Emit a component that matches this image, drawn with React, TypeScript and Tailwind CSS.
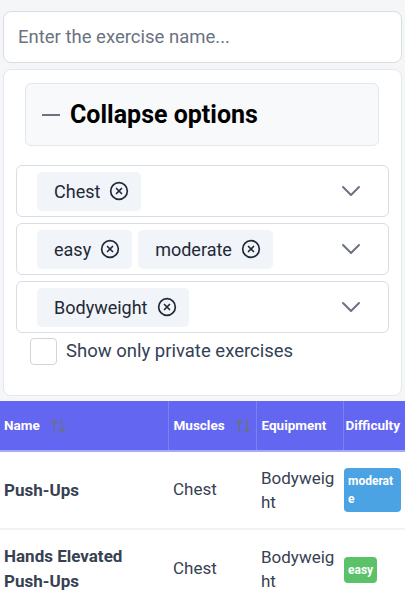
import { ChevronDown, CircleX, ArrowUpDown } from "lucide-react";

const rowFilters = [
  ["Chest"],
  ["easy", "moderate"],
  ["Bodyweight"],
];

const exercises = [
  { name: "Push-Ups", muscles: "Chest", equipment: "Bodyweight", difficulty: "moderate" },
  { name: "Hands Elevated Push-Ups", muscles: "Chest", equipment: "Bodyweight", difficulty: "easy" },
];

const Chip = ({ label }: { label: string }) => (
  <span className="flex h-[39px] items-center gap-[9px] rounded-[5px] bg-[#f1f4f8] pl-[17px] pr-[12px] text-[18px] text-[#1f2937]">
    {label}
    <CircleX className="h-[20px] w-[20px] text-[#1f2937]" strokeWidth={2} />
  </span>
);

const SortIcon = () => (
  <ArrowUpDown className="h-[18px] w-[18px] shrink-0 text-[#6b7280]" strokeWidth={1.75} />
);

const App = () => {
  return (
    <div className="min-h-screen w-full bg-[#f5f6f8] px-[3px] pt-[11px] font-['Roboto',sans-serif]">
      <input
        className="h-[52px] w-full rounded-lg border border-[#d8dde6] bg-white px-[14px] text-[18.5px] text-[#374151] outline-none placeholder:text-[#6b7280]"
        placeholder="Enter the exercise name..."
      />

      <div className="mt-[6px] h-[327px] rounded-lg border border-[#e3e7ee] bg-white pt-[13px]">
        <div className="ml-[21px] flex h-[63px] w-[354px] items-center rounded-md border border-[#e3e7ee] bg-[#f8f9fb] pl-[16px]">
          <span className="h-[2px] w-[18px] bg-[#6b7280]" />
          <span className="ml-[10px] text-[25px] font-bold text-black">Collapse options</span>
        </div>

        <div className="ml-[12px] mt-[19px] flex w-[373px] flex-col gap-[6px]">
          {rowFilters.map((chips, i) => (
            <div
              key={i}
              className="flex h-[52px] items-center rounded-md border border-[#d8dde6] pl-[20px] pr-[21px]"
            >
              <div className="flex flex-1 gap-[6px]">
                {chips.map((c) => (
                  <Chip key={c} label={c} />
                ))}
              </div>
              <ChevronDown className="h-[32px] w-[32px] text-[#6b7280]" strokeWidth={1.5} />
            </div>
          ))}
        </div>

        <label className="ml-[26px] mt-[5px] flex items-center gap-[9px] text-[18.5px] text-[#334155]">
          <span className="h-[27px] w-[27px] rounded-[4px] border border-[#d1d5db] bg-white" />
          Show only private exercises
        </label>
      </div>

      <div className="-mx-[3px] mt-[5px]">
        <table className="w-full table-fixed border-collapse">
          <colgroup>
            <col className="w-[168px]" />
            <col className="w-[88px]" />
            <col className="w-[87px]" />
            <col className="w-[62px]" />
          </colgroup>
          <thead>
            <tr className="h-[50px] border-b-2 border-[#a7aaf6] bg-[#6366f1] text-left text-[13.5px] font-bold text-white">
              <th className="border-r border-[#7d80f2] pl-[4px]">
                <span className="flex items-center gap-[9px]">
                  Name
                  <SortIcon />
                </span>
              </th>
              <th className="border-r border-[#7d80f2] pl-[5px]">
                <span className="flex items-center gap-[9px]">
                  Muscles
                  <SortIcon />
                </span>
              </th>
              <th className="border-r border-[#7d80f2] pl-[5px]">Equipment</th>
              <th className="pl-[2px]">Difficulty</th>
            </tr>
          </thead>
          <tbody className="bg-white text-[17px] text-[#374151]">
            {exercises.map((ex) => (
              <tr key={ex.name} className="border-b-2 border-[#f1f2f5]">
                <td className="py-[14px] pl-[4px] pr-[6px] align-middle font-bold leading-[25px]">{ex.name}</td>
                <td className="pl-[5px] align-middle">{ex.muscles}</td>
                <td className="break-all py-[14px] pl-[5px] align-middle leading-[24px]">{ex.equipment}</td>
                <td className="pl-[1px] pr-[4px] align-middle">
                  <span
                    className={
                      ex.difficulty === "easy"
                        ? "inline-block break-all rounded-[4px] bg-[#5cc26a] px-[4px] py-[4px] text-[12px] font-bold leading-[18px] text-white"
                        : "inline-block break-all rounded-[4px] bg-[#4ca3e3] px-[4px] py-[4px] text-[12px] font-bold leading-[18px] text-white"
                    }
                  >
                    {ex.difficulty}
                  </span>
                </td>
              </tr>
            ))}
          </tbody>
        </table>
      </div>
    </div>
  );
};

export default App;
